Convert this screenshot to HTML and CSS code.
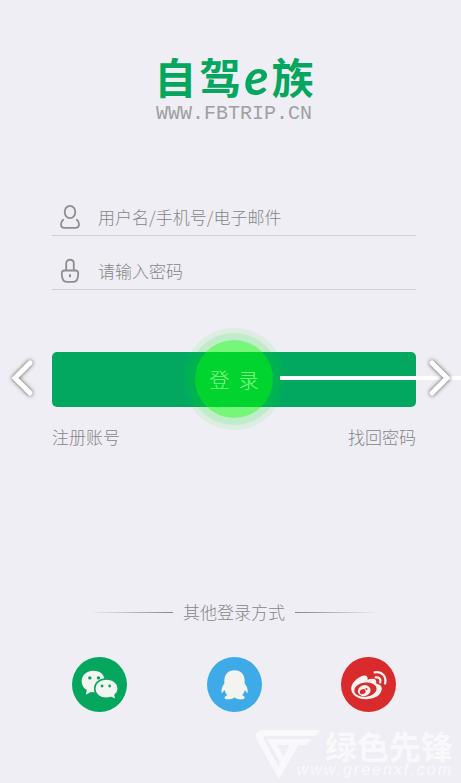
FILE: index.html
```html
<!DOCTYPE html>
<html lang="zh-CN">
<head>
<meta charset="utf-8">
<meta name="viewport" content="width=device-width, initial-scale=1">
<title>自驾e族</title>
<link rel="stylesheet" href="styles.css">
</head>
<body>
<main class="page">
  <header class="brand">
    <h1 class="brand-name"><span>自</span><span>驾</span><span class="brand-e">e</span><span>族</span></h1>
    <p class="brand-url">WWW.FBTRIP.CN</p>
  </header>

  <form class="login">
    <div class="field">
      <label for="user" aria-label="用户名">
        <svg width="20" height="26" viewBox="0 0 20 26" fill="none" stroke="#8e8e90" stroke-width="1.8" stroke-linecap="round" stroke-linejoin="round">
          <ellipse cx="10" cy="8" rx="5.3" ry="6.2"/>
          <path d="M3.2 15.7C1.5 17 1 18.700 1 20.200C1 22.800 2.300 23.800 4.600 23.800H15.400C17.700 23.800 19 22.800 19 20.200C19 18.700 18.500 17 16.800 15.700"/>
        </svg>
      </label>
      <input id="user" type="text" placeholder="用户名/手机号/电子邮件">
    </div>
    <div class="field">
      <label for="pass" aria-label="密码">
        <svg width="20" height="26" viewBox="0 0 20 26" fill="none" stroke="#8e8e90" stroke-width="1.8" stroke-linecap="round" stroke-linejoin="round">
          <path d="M6.200 12V5.500C6.200 0.500 13.800 0.500 13.800 5.500V12"/>
          <path d="M4.500 12.500H15.500Q18.500 12.500 18.200 16Q18 23.800 13.500 23.800H6.500Q2 23.800 1.800 16Q1.500 12.500 4.500 12.500Z"/>
          <path d="M10 17V18.500" stroke-width="2"/>
        </svg>
      </label>
      <input id="pass" type="password" placeholder="请输入密码">
    </div>
  </form>

  <div class="action">
    <button class="arrow" type="button" aria-label="上一张">
      <svg width="32" height="46" viewBox="0 0 32 46"><path d="M20 6L5 21L20 36" /></svg>
    </button>
    <div class="submit">
      <button class="submit-button" type="button">登&nbsp;&nbsp;录</button>
      <span class="pulse"></span>
      <span class="pointer"></span>
    </div>
    <button class="arrow" type="button" aria-label="下一张">
      <svg width="32" height="46" viewBox="0 0 32 46"><path d="M9 6L24 21L9 36" /></svg>
    </button>
  </div>

  <nav class="links">
    <a href="#">注册账号</a>
    <a href="#">找回密码</a>
  </nav>

  <section class="other">
    <h2 class="other-title">其他登录方式</h2>
    <div class="providers">
      <a class="provider wechat" href="#" aria-label="微信">
        <svg viewBox="0 0 54 54">
          <path fill="#f3f5f1" d="M21 13.500C13.500 13.500 9.500 18.500 9.500 24C9.500 27.500 11.500 30.500 14.500 32.500L13.500 37L18.500 34.300Q21 35 24 34.500L32 23C32 17.500 28 13.500 21 13.500Z"/>
          <path fill="#f3f5f1" stroke="#05a65d" stroke-width="1.500" d="M33.500 21.500C26.500 21.500 22.300 26 22.300 31C22.300 36.500 27 40.500 33.500 40.500Q36 40.500 38.500 39.800L43.500 42L42.200 37.500C44.500 35.500 45.500 33.500 45.500 31C45.500 26 41 21.500 33.500 21.500Z"/>
          <g fill="#05a65d"><circle cx="17.500" cy="20.500" r="1.700"/><circle cx="26" cy="20.500" r="1.700"/><circle cx="29.500" cy="28.500" r="1.400"/><circle cx="37" cy="28.500" r="1.400"/></g>
        </svg>
      </a>
      <a class="provider qq" href="#" aria-label="QQ">
        <svg viewBox="0 0 54 54">
          <path fill="#f3f3ef" d="M27 13C20.500 13 17 17.500 17 23L17 26C15 28.500 14 31.500 14.200 34.500C14.500 36 16 34.500 17.200 32.500Q18 35.500 20 37.500C16 39 16.500 41.500 20.500 41.500C23.500 41.500 26 41 27 39.500C28 41 30.500 41.500 33.500 41.500C37.500 41.500 38.500 39 34.500 37.500Q36.500 35.500 37.200 32.500C38.400 34.500 39.700 36 40 34.500C40.200 31.500 39 28.500 37 26L37 23C37 17.500 33.500 13 27 13Z"/>
        </svg>
      </a>
      <a class="provider weibo" href="#" aria-label="微博">
        <svg viewBox="0 0 54 54">
          <path fill="#faf4f0" d="M10 31C10 26 15 21 20 18.800C24 17 27 18.500 26 22.300C31 20.500 35.500 21 34.500 26C38.500 27 40.500 29 40 32C39 38.500 32 41.500 24.500 41.500C16.500 41.500 10 37.500 10 31Z"/>
          <ellipse cx="24" cy="32" rx="11" ry="7" transform="rotate(-6 24 32)" fill="#d92b2c"/>
          <ellipse cx="22.800" cy="33" rx="6.300" ry="5.300" transform="rotate(-20 22.800 33)" fill="#faf4f0"/>
          <ellipse cx="21.300" cy="34" rx="2.900" ry="2.300" transform="rotate(-25 21.300 34)" fill="#d92b2c"/>
          <circle cx="25" cy="31.500" r="1" fill="#d92b2c"/>
          <path d="M34 20C37.500 19.500 39.500 21.500 38.500 25M33 15C40 13.800 45 19 43.300 26" fill="none" stroke="#faf4f0" stroke-width="2.200" stroke-linecap="round"/>
        </svg>
      </a>
    </div>
  </section>

  <aside class="watermark">
    <svg width="66" height="50" viewBox="0 0 66 50" fill="#f9f9fc">
      <path d="M7 0H66L60 6H13Q7 6 9 10L25 39L24 49L2 10Q-2 2 7 0Z"/>
      <path d="M12 9H57L51 15H22L28 26L25 32Z"/>
      <path d="M24 49L47 9H38L24 34Z"/>
    </svg>
    <div class="watermark-text">
      <span class="watermark-name">绿色先锋</span>
      <span class="watermark-url">www.greenxf.com</span>
    </div>
  </aside>
</main>
</body>
</html>
```
FILE: styles.css
```css
* {
  box-sizing: border-box;
}

body {
  margin: 0;
  background: #eeeef4;
  color: #868688;
  font-family: "Noto Sans CJK SC", sans-serif;
  font-size: 17px;
  font-weight: 300;
  line-height: 24px;
}

h1,
h2,
p {
  margin: 0;
  font-weight: inherit;
}

button {
  padding: 0;
  border: 0;
  font: inherit;
}

a {
  color: inherit;
  text-decoration: none;
}

svg {
  display: block;
}

.page {
  position: relative;
  min-height: 100vh;
  overflow: hidden;
  padding-top: 50px;
}

.brand {
  display: flex;
  flex-direction: column;
  align-items: center;
  padding-left: 7px;
}

.brand-name {
  display: flex;
  gap: 3px;
  color: #05a65d;
  font-size: 42px;
  font-weight: 700;
  line-height: 52px;
}

.brand-e {
  font-family: Lato, sans-serif;
  font-size: 50px;
  font-style: italic;
}

.brand-url {
  color: #a0a0a2;
  font-family: "Liberation Mono", monospace;
  font-size: 20px;
}

.login {
  margin: 56px 45px 0 52px;
}

.field {
  display: flex;
  align-items: center;
  gap: 18px;
  height: 54px;
  padding: 16px 0 0 8px;
  border-bottom: 1px solid #cfcfd5;
}

.field input {
  flex: 1;
  min-width: 0;
  padding: 0;
  border: 0;
  outline: 0;
  background: none;
  color: inherit;
  font: inherit;
}

.field input::placeholder {
  color: #868688;
  opacity: 1;
}

.action {
  display: grid;
  grid-template-columns: 52px 1fr 45px;
  align-items: center;
  margin-top: 62px;
}

.arrow {
  display: flex;
  justify-content: center;
  background: none;
}

.arrow path {
  fill: none;
  stroke: #fff;
  stroke-width: 5;
  stroke-linecap: round;
  stroke-linejoin: miter;
}

.arrow svg {
  position: relative;
  z-index: 1;
  overflow: visible;
  filter: drop-shadow(0 0 2px #555);
}

.submit {
  position: relative;
}

.submit-button {
  display: block;
  width: 100%;
  height: 55px;
  border-radius: 5px;
  background: #02a85f;
  color: #fff;
  font-size: 20px;
}

.pulse {
  position: absolute;
  top: 50%;
  left: 50%;
  width: 78px;
  height: 78px;
  margin: -40px 0 0 -39px;
  border-radius: 50%;
  background: rgba(0, 255, 0, 0.5);
  box-shadow: 0 0 0 7px rgba(0, 230, 30, 0.13), 0 0 0 12px rgba(0, 230, 30, 0.07);
  pointer-events: none;
}

.pointer {
  position: absolute;
  top: 24px;
  right: -45px;
  left: calc(50% + 46px);
  height: 4px;
  background: #fff;
}

.links {
  display: flex;
  justify-content: space-between;
  margin: 18px 45px 0 52px;
}

.other {
  margin: 151px 65px 0 72px;
}

.other-title {
  display: flex;
  align-items: center;
  gap: 10px;
  padding: 0 17px;
  font-size: 17px;
}

.other-title::before,
.other-title::after {
  content: "";
  flex: 1;
  height: 1px;
  background: linear-gradient(to right, transparent, #868688);
}

.other-title::after {
  background: linear-gradient(to left, transparent, #868688);
}

.providers {
  display: flex;
  justify-content: space-between;
  margin-top: 33px;
}

.provider {
  width: 55px;
  height: 55px;
  border-radius: 50%;
}

.wechat {
  background: #05a65d;
}

.qq {
  background: #3eabe8;
}

.weibo {
  background: #d92b2c;
}

.watermark {
  display: flex;
  justify-content: flex-end;
  margin-top: 18px;
  padding-right: 8px;
  color: #f9f9fc;
}

.watermark-text {
  display: flex;
  flex-direction: column;
  align-items: flex-end;
  margin-left: -24px;
}

.watermark-name {
  font-size: 32px;
  font-weight: 700;
  line-height: 30px;
}

.watermark-url {
  font-family: "Liberation Sans", sans-serif;
  font-size: 16px;
  font-style: italic;
  letter-spacing: 2px;
  line-height: 20px;
}
```
